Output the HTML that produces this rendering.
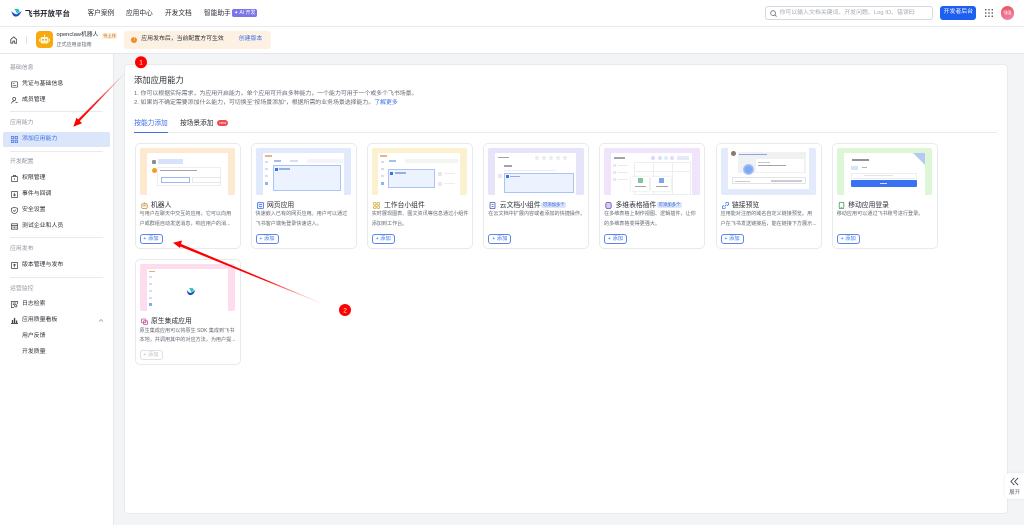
<!DOCTYPE html>
<html lang="zh"><head><meta charset="utf-8"><title>飞书开放平台</title>
<style>
*{box-sizing:border-box;margin:0;padding:0}
html,body{width:1024px;height:525px;overflow:hidden;background:#fff;font-family:"Liberation Sans","Noto Sans CJK SC",sans-serif;color:#1f2329}
#w{position:absolute;left:0;top:0;width:1024px;height:525px;overflow:hidden;background:#fff;filter:blur(.28px)}
.a{position:absolute;white-space:nowrap}
.nav{top:7.5px;font-size:6.7px;line-height:11px;color:#2b2f36}
.sec{left:10px;font-size:5.900px;line-height:9px;color:#8f959e}
.it{left:22px;font-size:5.900px;line-height:9px;color:#2b2f36}
.hr{left:10px;width:93px;height:1px;background:#e8eaed}
.ic{position:absolute;left:10.5px;width:7px;height:7px;fill:none;stroke:#3b4048;stroke-width:.7}
.card{position:absolute;width:106px;height:106px;background:#fff;border:1px solid #e8eaed;border-radius:5px}
.img{position:absolute;left:4px;top:4px;width:95.5px;height:46.5px;overflow:hidden;border-radius:2px}
.in{position:absolute;background:#fff}
.t{position:absolute;left:15.5px;top:55.5px;font-size:6.8px;line-height:11px;color:#2b2f36;white-space:nowrap}
.d{position:absolute;left:4px;top:66.4px;width:98px;font-size:5.100px;line-height:9.300px;color:#646a73;white-space:nowrap}
.b{position:absolute;left:4px;top:90px;width:23px;height:10px;border:.7px solid #5b86f0;border-radius:3px;font-size:5.300px;line-height:8.600px;color:#3c6fe8;text-align:center}
.i{position:absolute;left:5px;top:58px;width:7px;height:7px;fill:none;stroke-width:.8}
.tag{position:absolute;left:57px;top:58px;height:6px;padding:0 1.500px;background:#dbe6fd;border-radius:2px;font-size:4.400px;line-height:6px;color:#2f5fd0;white-space:nowrap}
.bl{position:absolute;background:#d5def0}
</style></head><body>
<div id="w">

<!-- top bar -->
<div class="a" style="left:0;top:0;width:1024px;height:27px;background:#fff;border-bottom:1px solid #e8eaed"></div>
<svg class="a" style="left:11px;top:8px" width="11" height="9.500" viewBox="0 0 14 11"><path d="M.5 3.500C3 6 5 7.500 7 7.500L13.500 3.500C11.500 8 9 10.500 6 10.500C3.500 10.500 1.500 8 .5 3.500Z" fill="#1a4fc4"/><path d="M4 .5H9.500L11 4 7.500 6.500C6.500 4 5.500 2.300 4 .5Z" fill="#26c4b4"/></svg>
<div class="a" style="left:25px;top:7.500px;font-size:7.500px;line-height:11px;font-weight:bold;color:#1f2329">飞书开放平台</div>
<div class="a nav" style="left:87.500px">客户案例</div>
<div class="a nav" style="left:126px">应用中心</div>
<div class="a nav" style="left:165px">开发文档</div>
<div class="a nav" style="left:204px">智能助手</div>
<div class="a" style="left:232.300px;top:9px;width:25px;height:8px;background:#7b74ea;border-radius:2px;color:#fff;font-size:5px;line-height:8px;text-align:center">✦ AI 开发</div>

<div class="a" style="left:764.500px;top:6.300px;width:168.500px;height:13.500px;border:1px solid #d5d8dd;border-radius:3px"></div>
<svg class="a" style="left:769.500px;top:9.500px" width="7" height="7" viewBox="0 0 8 8"><circle cx="3.500" cy="3.500" r="2.700" fill="none" stroke="#646a73" stroke-width=".9"/><path d="M5.500 5.500L7.500 7.500" stroke="#646a73" stroke-width=".9"/></svg>
<div class="a" style="left:779.500px;top:8.500px;font-size:5.900px;line-height:9px;color:#a4a9b1">你可以输入文档关键词、开发问题、Log ID、错误码</div>
<div class="a" style="left:940.300px;top:6.300px;width:36px;height:13.500px;background:#1d5ff0;border-radius:3px;color:#fff;font-size:5.900px;line-height:13.500px;text-align:center">开发者后台</div>
<svg class="a" style="left:984.500px;top:9px" width="8" height="8" viewBox="0 0 8.500 8.500" fill="#555b64"><rect x="0" y="0" width="1.500" height="1.500"/><rect x="3.500" y="0" width="1.500" height="1.500"/><rect x="7" y="0" width="1.500" height="1.500"/><rect x="0" y="3.500" width="1.500" height="1.500"/><rect x="3.500" y="3.500" width="1.500" height="1.500"/><rect x="7" y="3.500" width="1.500" height="1.500"/><rect x="0" y="7" width="1.500" height="1.500"/><rect x="3.500" y="7" width="1.500" height="1.500"/><rect x="7" y="7" width="1.500" height="1.500"/></svg>
<div class="a" style="left:1000.700px;top:6px;width:13.500px;height:13.500px;border-radius:50%;background:linear-gradient(160deg,#e8505a,#f08ab0);color:#fff;font-size:4px;line-height:13.500px;text-align:center">强强</div>

<!-- second bar -->
<div class="a" style="left:0;top:27px;width:1024px;height:27px;background:#fff;border-bottom:1px solid #e6e8eb"></div>
<svg class="a" style="left:9.700px;top:36.200px" width="7.500" height="8" viewBox="0 0 9 10"><path d="M.8 4.300L4.500 1 8.200 4.300V9H5.600V6.300H3.400V9H.8Z" fill="none" stroke="#3b4048" stroke-width="1" stroke-linejoin="round"/></svg>
<div class="a" style="left:26px;top:36px;width:1px;height:8px;background:#e4e6e9"></div>
<div class="a" style="left:36px;top:31px;width:17px;height:17px;border-radius:4px;background:#f7a90f"></div>
<svg class="a" style="left:38px;top:33px" width="13" height="13" viewBox="0 0 13 13"><rect x="2.500" y="4" width="8" height="6.500" rx="1.500" fill="#fff3c8"/><rect x="6" y="1.500" width="1" height="2.500" fill="#fff3c8"/><rect x="1" y="6" width="1" height="2.500" fill="#fff3c8"/><rect x="11" y="6" width="1" height="2.500" fill="#fff3c8"/><circle cx="5" cy="6.800" r=".8" fill="#d18a00"/><circle cx="8" cy="6.800" r=".8" fill="#d18a00"/></svg>
<div class="a" style="left:56.500px;top:31px;font-size:5.800px;line-height:9px;color:#2b2f36">openclaw机器人</div>
<div class="a" style="left:101.700px;top:32.500px;width:15.700px;height:6.500px;background:#fdeedd;border-radius:1.500px;color:#c9761a;font-size:4.200px;line-height:6.500px;text-align:center">待上线</div>
<div class="a" style="left:56.500px;top:40.500px;font-size:5px;line-height:8px;color:#646a73">正式应用@指南</div>
<div class="a" style="left:124.300px;top:30.700px;width:146.400px;height:18.700px;background:#fdf1e3;border-radius:3px"></div>
<div class="a" style="left:131.200px;top:36.500px;width:6.300px;height:6.300px;border-radius:50%;background:#f08a24;color:#fff;font-size:5px;line-height:6.300px;text-align:center">!</div>
<div class="a" style="left:141.300px;top:35.300px;font-size:5.900px;line-height:9px;color:#2b2f36">应用发布后，当前配置方可生效</div>
<div class="a" style="left:238.700px;top:35.300px;font-size:5.900px;line-height:9px;color:#3c6fe8">创建版本</div>

<!-- sidebar -->
<div class="a" style="left:113px;top:54px;width:911px;height:471px;background:#f3f4f6;border-left:1px solid #e6e8eb"></div>
<div class="a sec" style="top:64px">基础信息</div>
<svg class="ic" style="top:80.500px" viewBox="0 0 7 7"><rect x=".4" y=".8" width="6.200" height="5.400" rx=".6"/><path d="M1.700 2.700H3.500M1.700 4.300H5.300"/></svg><div class="a it" style="top:79.500px">凭证与基础信息</div>
<svg class="ic" style="top:96.500px" viewBox="0 0 7 7"><circle cx="3.200" cy="2" r="1.500"/><path d="M.6 6.600C.8 4.800 2 4.200 3.200 4.200M4.500 5.500H6.700"/></svg><div class="a it" style="top:95.500px">成员管理</div>
<div class="a hr" style="top:111px"></div>
<div class="a sec" style="top:119px">应用能力</div>
<div class="a" style="left:3.300px;top:131.700px;width:106.700px;height:15.300px;background:#dbe6fb;border-radius:2px"></div>
<svg class="ic" style="top:135.700px;stroke:#3c6fe8" viewBox="0 0 7 7"><rect x=".4" y=".4" width="2.400" height="2.400"/><rect x="4.200" y=".4" width="2.400" height="2.400"/><rect x=".4" y="4.200" width="2.400" height="2.400"/><rect x="4.200" y="4.200" width="2.400" height="2.400"/></svg>
<div class="a it" style="top:134.800px;color:#3c6fe8">添加应用能力</div>
<div class="a hr" style="top:151.300px"></div>
<div class="a sec" style="top:157.800px">开发配置</div>
<svg class="ic" style="top:174.800px" viewBox="0 0 7 7"><rect x=".5" y="1.500" width="6" height="5.100" rx=".6"/><path d="M2.300 1.500V.5H4.700V1.500M3.500 3.300V4.800"/></svg><div class="a it" style="top:173.800px">权限管理</div>
<svg class="ic" style="top:190.800px" viewBox="0 0 7 7"><rect x=".4" y=".4" width="6.200" height="6.200" rx=".6"/><path d="M3.500 1.800V4.800M2.200 3.600L3.500 4.900 4.800 3.600"/></svg><div class="a it" style="top:189.800px">事件与回调</div>
<svg class="ic" style="top:206.800px" viewBox="0 0 7 7"><path d="M3.500.4L6.500 1.300V3.500C6.500 5.200 5 6.200 3.500 6.700 2 6.200.5 5.200.5 3.500V1.300Z"/><path d="M2.200 3.400L3.200 4.400 4.900 2.600"/></svg><div class="a it" style="top:205.800px">安全设置</div>
<svg class="ic" style="top:222.800px" viewBox="0 0 7 7"><rect x=".4" y=".8" width="6.200" height="5.400"/><path d="M.4 2.500H6.600M2 3.500V5.200M3.500 3.500V5.200M5 3.500V5.200"/></svg><div class="a it" style="top:221.800px">测试企业和人员</div>
<div class="a hr" style="top:237.300px"></div>
<div class="a sec" style="top:245px">应用发布</div>
<svg class="ic" style="top:262px" viewBox="0 0 7 7"><rect x=".4" y=".4" width="6.200" height="6.200" rx=".6"/><path d="M3.500 5.200V2.200M2.200 3.400L3.500 2.100 4.800 3.400"/></svg><div class="a it" style="top:261px">版本管理与发布</div>
<div class="a hr" style="top:277.300px"></div>
<div class="a sec" style="top:284.500px">运营监控</div>
<svg class="ic" style="top:301.200px" viewBox="0 0 7 7"><path d="M3 6.600H.5V.4H6.500V3"/><path d="M1.800 2H5.200M1.800 3.500H3.500"/><circle cx="4.800" cy="4.800" r="1.200"/></svg><div class="a it" style="top:300.200px">日志检索</div>
<svg class="a" style="left:10.500px;top:317px" width="7" height="7" viewBox="0 0 8 8" fill="#3b4048"><rect x="0" y="7" width="8" height="1"/><rect x="1" y="3.500" width="1.500" height="3.500"/><rect x="3.300" y="1" width="1.500" height="6"/><rect x="5.600" y="4" width="1.500" height="3"/></svg>
<div class="a it" style="top:316.200px">应用质量看板</div>
<svg class="a" style="left:97.500px;top:318px" width="6" height="5" viewBox="0 0 6 5"><path d="M1 3.500L3 1.500 5 3.500" fill="none" stroke="#8f959e" stroke-width=".7"/></svg>
<div class="a it" style="top:332.200px">用户反馈</div>
<div class="a it" style="top:348.200px">开发质量</div>

<!-- main panel -->
<div class="a" style="left:124px;top:63.500px;width:883.500px;height:450.700px;background:#fff;border:1px solid #e8eaed;border-radius:4px"></div>
<div class="a" style="left:134px;top:73.500px;font-size:8.300px;line-height:13px;color:#2b2f36">添加应用能力</div>
<div class="a" style="left:134px;top:89.500px;font-size:5.900px;line-height:9px;color:#646a73">1. 你可以根据实际需求，为应用开启能力。单个应用可开启多种能力，一个能力可用于一个或多个飞书场景。</div>
<div class="a" style="left:134px;top:98.500px;font-size:5.900px;line-height:9px;color:#646a73">2. 如果尚不确定需要添加什么能力，可切换至“按场景添加”，根据所需的业务场景选择能力。<span style="color:#3c6fe8">了解更多</span></div>
<div class="a" style="left:134.300px;top:118px;font-size:6.700px;line-height:11px;color:#3c6fe8">按能力添加</div>
<div class="a" style="left:180px;top:118px;font-size:6.700px;line-height:11px;color:#2b2f36">按场景添加</div>
<div class="a" style="left:217.300px;top:120px;width:11px;height:6px;border-radius:3px;background:#ef4a50;color:#fff;font-size:3.800px;line-height:6px;text-align:center">new</div>
<div class="a" style="left:134px;top:132.200px;width:863px;height:1px;background:#e8eaed"></div>
<div class="a" style="left:134.300px;top:131.500px;width:33.700px;height:1.200px;background:#3c6fe8"></div>

<!-- cards -->
<div class="card" style="left:134.500px;top:143px">
 <div class="img" style="background:#fde8d0"><div class="in" style="left:7px;top:5px;width:81px;height:42px"></div>
  <div class="bl" style="left:12.500px;top:11.500px;width:4px;height:4px;background:#8a8d92;border-radius:1px"></div><div class="bl" style="left:18.500px;top:11px;width:25px;height:5px;background:#d6e4fb"></div>
  <div class="bl" style="left:12px;top:19.500px;width:5px;height:5px;border-radius:50%;background:#f39a2c"></div>
  <div class="bl" style="left:20.500px;top:22px;width:37px;height:1.300px;background:#a0a3a8"></div>
  <div class="in" style="left:17.500px;top:19px;width:64px;height:19px;border:.5px solid #eceef1"></div>
  <div class="bl" style="left:20.500px;top:22px;width:37px;height:1.300px;background:#a0a3a8"></div>
  <div class="in" style="left:21px;top:29px;width:29px;height:5.700px;border:.7px solid #9db8f0"></div>
  <div class="in" style="left:52px;top:29px;width:29px;height:5.700px;border:.5px solid #e6e8ec"></div>
 </div>
 <svg class="i" viewBox="0 0 7 7" stroke="#c98a2e"><rect x=".8" y="1.800" width="5.400" height="4.600" rx="1"/><path d="M3.500.4V1.800M2 3.800H5"/></svg><div class="t">机器人</div>
 <div class="d">与用户在聊天中交互的应用。它可以向用<br>户或群组自动发送消息，响应用户的消...</div>
 <div class="b">+ 添加</div>
</div>

<div class="card" style="left:250.500px;top:143px">
 <div class="img" style="background:#e1e9fc"><div class="in" style="left:7px;top:5px;width:81px;height:42px"></div>
  <div class="bl" style="left:9px;top:7px;width:7px;height:1.500px;background:#e9b48a"></div>
  <div class="bl" style="left:9px;top:13px;width:3px;height:2px"></div><div class="bl" style="left:9px;top:20px;width:3px;height:2px"></div><div class="bl" style="left:9px;top:27px;width:3px;height:2px"></div><div class="bl" style="left:9px;top:34px;width:3px;height:3px;background:#8db4f5"></div>
  <div class="bl" style="left:18px;top:12px;width:7px;height:1.500px;background:#a8bde8"></div><div class="bl" style="left:34px;top:12px;width:8px;height:1.500px"></div><div class="bl" style="left:51px;top:11px;width:36px;height:4px;background:#f3f5f8"></div>
  <div class="bl" style="left:17.300px;top:17px;width:68.700px;height:25.700px;background:#edf3fe;border:.8px solid #a9c4f5"></div>
  <div class="bl" style="left:19px;top:19.500px;width:3px;height:3px;background:#3c6fe8"></div><div class="bl" style="left:23px;top:20.300px;width:11px;height:1.300px;background:#96aee0"></div>
 </div>
 <svg class="i" viewBox="0 0 7 7" stroke="#3c6fe8"><rect x=".5" y=".5" width="6" height="6" rx=".8" fill="#e3ecfd"/><path d="M2 2.500H5M2 4.500H5"/></svg><div class="t">网页应用</div>
 <div class="d">快速嵌入已有的网页应用。用户可以通过<br>飞书客户端免登录快速进入。</div>
 <div class="b">+ 添加</div>
</div>

<div class="card" style="left:366.700px;top:143px">
 <div class="img" style="background:#fbf1cf"><div class="in" style="left:6.300px;top:5px;width:81.700px;height:42px"></div>
  <div class="bl" style="left:8px;top:7px;width:7px;height:1.500px;background:#e9b48a"></div>
  <div class="bl" style="left:9px;top:13px;width:3px;height:2px"></div><div class="bl" style="left:9px;top:20px;width:3px;height:2px"></div><div class="bl" style="left:9px;top:27px;width:3px;height:2px"></div><div class="bl" style="left:9px;top:34px;width:3px;height:3px;background:#8db4f5"></div>
  <div class="bl" style="left:17px;top:12px;width:7px;height:1.500px;background:#a8bde8"></div><div class="bl" style="left:33px;top:11px;width:53px;height:4px;background:#f3f5f0"></div>
  <div class="bl" style="left:16.300px;top:21px;width:46.700px;height:18.700px;background:#edf3fe;border:.8px solid #a9c4f5"></div>
  <div class="bl" style="left:18.500px;top:23.500px;width:3px;height:3px;background:#3c6fe8"></div><div class="bl" style="left:23px;top:24.300px;width:11px;height:1.300px;background:#96aee0"></div>
  <div class="bl" style="left:66px;top:23.700px;width:4px;height:4px;background:#e6e8ec"></div><div class="bl" style="left:72px;top:25px;width:11px;height:1px;background:#eceef0"></div>
  <div class="bl" style="left:66px;top:33.700px;width:4px;height:4px;background:#e6e8ec"></div><div class="bl" style="left:72px;top:35px;width:11px;height:1px;background:#eceef0"></div>
 </div>
 <svg class="i" viewBox="0 0 7 7" stroke="#d8aa3a"><rect x=".5" y=".5" width="2.500" height="2.500" rx=".8"/><rect x="4" y=".5" width="2.500" height="2.500" rx=".8"/><rect x=".5" y="4" width="2.500" height="2.500" rx=".8"/><rect x="4" y="4" width="2.500" height="2.500" rx=".8"/></svg><div class="t" style="left:16.300px">工作台小组件</div>
 <div class="d">实时展现图表、图文资讯等信息通过小组件<br>添加到工作台。</div>
 <div class="b">+ 添加</div>
</div>

<div class="card" style="left:483.300px;top:143px">
 <div class="img" style="background:#e5e4f9"><div class="in" style="left:7px;top:5px;width:81px;height:42px"></div>
  <div class="bl" style="left:10px;top:8.500px;width:11px;height:1.500px;background:#a0a3a8"></div>
  <div class="bl" style="left:47px;top:8px;width:4px;height:4px;border-radius:50%;background:#ebedf0"></div><div class="bl" style="left:54px;top:8px;width:4px;height:4px;border-radius:50%;background:#ebedf0"></div><div class="bl" style="left:61px;top:8px;width:4px;height:4px;border-radius:50%;background:#ebedf0"></div><div class="bl" style="left:68px;top:8px;width:4px;height:4px;border-radius:50%;background:#ebedf0"></div><div class="bl" style="left:75px;top:8px;width:4px;height:4px;border-radius:50%;background:#ebedf0"></div>
  <div class="bl" style="left:16px;top:17px;width:8px;height:1.500px;background:#a0a3a8"></div>
  <div class="bl" style="left:16px;top:21.500px;width:52px;height:1.500px;background:#eceef1"></div>
  <div class="bl" style="left:10px;top:26px;width:4px;height:4px;background:#e6e8ec"></div>
  <div class="bl" style="left:15.300px;top:24.700px;width:70px;height:20px;background:#edf3fe;border:.8px solid #a9c4f5"></div>
  <div class="bl" style="left:18px;top:27px;width:3px;height:3px;background:#3c6fe8"></div><div class="bl" style="left:22px;top:27.800px;width:10px;height:1.300px;background:#96aee0"></div>
 </div>
 <svg class="i" viewBox="0 0 7 7" stroke="#4a55a8"><rect x="1" y=".4" width="5" height="6.200" rx="1"/><path d="M2.500 2.500H4.500M2.500 4.500H4.500"/></svg><div class="t">云文档小组件</div><div class="tag">可添加多个</div>
 <div class="d">在云文档中扩展内容或者添加的快捷操作。</div>
 <div class="b">+ 添加</div>
</div>

<div class="card" style="left:599px;top:143px">
 <div class="img" style="background:#efe4fa"><div class="in" style="left:7px;top:5px;width:81px;height:42px"></div>
  <div class="bl" style="left:10px;top:9px;width:11px;height:1.500px;background:#a0a3a8"></div>
  <div class="bl" style="left:47px;top:8px;width:4px;height:4px;border-radius:50%;background:#dcd8f6"></div><div class="bl" style="left:54px;top:8px;width:4px;height:4px;border-radius:50%;background:#d6e2fa"></div><div class="bl" style="left:60px;top:8px;width:4px;height:4px;border-radius:50%;background:#d6f0f5"></div><div class="bl" style="left:66px;top:8px;width:4px;height:4px;border-radius:50%;background:#e9d9f8"></div><div class="bl" style="left:73px;top:8px;width:12px;height:4px;background:#e4eafa"></div>
  <div class="bl" style="left:9px;top:16px;width:3px;height:3px;background:#e8eaee"></div><div class="bl" style="left:9px;top:23px;width:3px;height:3px;background:#e8eaee"></div><div class="bl" style="left:9px;top:30px;width:3px;height:3px;background:#e8eaee"></div><div class="bl" style="left:14px;top:17px;width:10px;height:1px;background:#e8eaee"></div><div class="bl" style="left:14px;top:24px;width:10px;height:1px;background:#e8eaee"></div><div class="bl" style="left:14px;top:31px;width:10px;height:1px;background:#e8eaee"></div>
  <div class="in" style="left:30px;top:14px;width:57px;height:33px;border:.5px solid #eceef1"></div>
  <div class="bl" style="left:30px;top:23px;width:57px;height:.5px;background:#eceef1"></div><div class="bl" style="left:49px;top:14px;width:.5px;height:33px;background:#eceef1"></div><div class="bl" style="left:68px;top:14px;width:.5px;height:33px;background:#eceef1"></div>
  <div class="in" style="left:27.400px;top:28.700px;width:18px;height:14px;box-shadow:0 0 2px #d5d5d5"></div><div class="bl" style="left:34px;top:30px;width:5px;height:5px;background:#7cc89a"></div><div class="bl" style="left:31px;top:38px;width:11px;height:1.300px;background:#a0a3a8"></div>
  <div class="in" style="left:47.400px;top:28.700px;width:20px;height:14px;box-shadow:0 0 2px #d5d5d5"></div><div class="bl" style="left:55px;top:30px;width:5px;height:5px;background:#7ea4f0"></div><div class="bl" style="left:51.500px;top:38px;width:12px;height:1.300px;background:#a0a3a8"></div>
 </div>
 <svg class="i" viewBox="0 0 7 7" stroke="#6b4ab8"><rect x=".8" y=".4" width="5.400" height="6.200" rx="1.800" fill="#d9c8f2"/></svg><div class="t">多维表格插件</div><div class="tag">可添加多个</div>
 <div class="d">在多维表格上制作视图、逻辑插件，让你<br>的多维表格变得更强大。</div>
 <div class="b">+ 添加</div>
</div>

<div class="card" style="left:715.500px;top:143px">
 <div class="img" style="background:#e3eafc"><div class="in" style="left:7px;top:0;width:81px;height:41px"></div>
  <div class="bl" style="left:10px;top:3px;width:5px;height:5px;border-radius:50%;background:#8a7a6a"></div><div class="bl" style="left:18px;top:4.500px;width:28px;height:1.300px;background:#8da6e2"></div>
  <div class="bl" style="left:17.400px;top:4.300px;width:68px;height:21px;background:#f0f1f3"></div>
  <div class="bl" style="left:18px;top:5.500px;width:28px;height:1.300px;background:#8da6e2"></div>
  <div class="in" style="left:35px;top:11px;width:48px;height:13px"></div>
  <div class="bl" style="left:37px;top:17px;width:28px;height:1.200px;background:#a0a3a8"></div>
  <div class="bl" style="left:37px;top:14px;width:12px;height:1px;background:#c4c7cc"></div>
  <div class="bl" style="left:22px;top:16px;width:11px;height:11px;border-radius:50%;background:radial-gradient(circle,#7fa8f6 40%,rgba(200,220,255,.2) 100%)"></div>
  <div class="in" style="left:11px;top:29.300px;width:74px;height:7px;border:.7px solid #e2e4e8"></div>
  <div class="bl" style="left:14px;top:32.500px;width:15px;height:1px;background:#ccc"></div><div class="bl" style="left:50px;top:32px;width:31px;height:2px;background:#c9cdd2"></div>
 </div>
 <svg class="i" viewBox="0 0 7 7" stroke="#3c6fe8"><path d="M3.200 1.500L4.300.6C5 0 6 .2 6.400.8 6.900 1.500 6.800 2.300 6.200 2.800L5 3.800M3.800 5.500L2.700 6.400C2 7 1 6.800.6 6.200.1 5.500.2 4.700.8 4.200L2 3.200M2.600 4.500L4.500 2.600"/></svg><div class="t">链接预览</div>
 <div class="d">应用能对注册的域名自定义链接预览。用<br>户在飞书发送链接后，能在链接下方展示...</div>
 <div class="b">+ 添加</div>
</div>

<div class="card" style="left:831.700px;top:143px">
 <div class="img" style="background:#dcf6d6"><div class="in" style="left:7px;top:5px;width:81px;height:42px"></div>
  <div style="position:absolute;left:76px;top:5px;width:0;height:0;border-top:12px solid #b4caf4;border-left:12px solid transparent"></div>
  <div class="bl" style="left:15px;top:11px;width:17px;height:1.500px;background:#909398"></div>
  <div class="bl" style="left:14.400px;top:17.500px;width:7px;height:4px;background:#d6e4fb"></div><div class="bl" style="left:25px;top:19px;width:5px;height:1.300px;background:#b0b3b8"></div>
  <div class="in" style="left:14.400px;top:24.500px;width:66px;height:6px;border:.5px solid #eceef1"></div><div class="bl" style="left:27px;top:27px;width:29px;height:1px;background:#e2e4e8"></div>
  <div class="bl" style="left:14.400px;top:32px;width:66px;height:6.700px;background:#3a72f6;border-radius:1px"></div>
  <div class="bl" style="left:43px;top:35px;width:7px;height:1px;background:#cfe0ff"></div>
 </div>
 <svg class="i" viewBox="0 0 7 7" stroke="#3f9a5a"><rect x="1.200" y=".4" width="4.600" height="6.200" rx=".8"/><path d="M2.800 5.400H4.200"/></svg><div class="t">移动应用登录</div>
 <div class="d">移动应用可以通过飞书账号进行登录。</div>
 <div class="b">+ 添加</div>
</div>

<div class="card" style="left:134.500px;top:259.300px">
 <div class="img" style="background:#fddcee"><div class="in" style="left:7px;top:5px;width:81px;height:42px"></div>
  <div class="bl" style="left:9px;top:6.500px;width:6px;height:1.300px;background:#e3ad80"></div>
  <div class="bl" style="left:9px;top:12px;width:3px;height:2px"></div><div class="bl" style="left:9px;top:19px;width:3px;height:2px"></div><div class="bl" style="left:9px;top:26px;width:3px;height:2px"></div><div class="bl" style="left:9px;top:33px;width:3px;height:2px"></div><div class="bl" style="left:9px;top:39px;width:3px;height:3px;background:#78b0f5"></div>
  <svg style="position:absolute;left:46px;top:22.700px" width="10" height="9" viewBox="0 0 14 11"><path d="M1 3.500C3 6 5 7.500 7 7.500L13 3.500C11.500 8 9 10.500 6 10.500C3.500 10.500 1.500 8 1 3.500Z" fill="#1a4fc4"/><path d="M4 .8H9.500L11 4 7.500 6.500C6.500 4 5.500 2.300 4 .8Z" fill="#26c4b4"/></svg>
 </div>
 <svg class="i" viewBox="0 0 7 7" stroke="#c0569a"><rect x=".4" y="1" width="4.400" height="3.800" rx=".8"/><rect x="2.400" y="2.800" width="4.200" height="3.600" rx=".8"/></svg><div class="t">原生集成应用</div>
 <div class="d">原生集成应用可以将原生 SDK 集成到飞书<br>本地，并调用其中的对应方法，为用户提...</div>
 <div class="b" style="border-color:#dee0e3;color:#bbbfc4">+ 添加</div>
</div>

<!-- expand -->
<div class="a" style="left:1005px;top:473.300px;width:19px;height:26px;background:#fff;border-radius:4px 0 0 4px;box-shadow:0 0 3px rgba(0,0,0,.08)"></div>
<svg class="a" style="left:1009.500px;top:477px" width="9" height="9" viewBox="0 0 10 9"><path d="M4.800 .5L1 4.500 4.800 8.500M9 .5L5.200 4.500 9 8.500" fill="none" stroke="#3b4048" stroke-width="1"/></svg>
<div class="a" style="left:1009.300px;top:488.500px;font-size:5.400px;line-height:8px;color:#646a73">展开</div>

<!-- annotations -->
<svg class="a" style="left:0;top:0" width="1024" height="525" viewBox="0 0 1024 525">
<defs>
<linearGradient id="g1" gradientUnits="userSpaceOnUse" x1="126" y1="72" x2="74" y2="126"><stop offset="0" stop-color="#ff2020" stop-opacity="0"/><stop offset=".55" stop-color="#f52020"/><stop offset="1" stop-color="#f00"/></linearGradient>
<linearGradient id="g2" gradientUnits="userSpaceOnUse" x1="325" y1="305" x2="175" y2="243"><stop offset="0" stop-color="#ff2020" stop-opacity="0"/><stop offset=".4" stop-color="#f00"/><stop offset="1" stop-color="#f00"/></linearGradient>
</defs>
<path d="M126 71.800L126.200 72.100 77.500 123.500 75.800 121.800Z" fill="url(#g1)"/>
<path d="M73.300 126.700L76.500 117.800 82 123.200Z" fill="#f00"/>
<path d="M326 305L325.800 305.300 179 246 180 243.500Z" fill="url(#g2)"/>
<path d="M173 242.700L182 240.500 180 248Z" fill="#f00"/>
<circle cx="141" cy="62.300" r="6" fill="#f00"/>
<circle cx="345" cy="310" r="6" fill="#f00"/>
<text x="141" y="64.600" font-size="6.500" fill="#fff" text-anchor="middle" font-family="Liberation Sans">1</text>
<text x="345" y="312.300" font-size="6.500" fill="#fff" text-anchor="middle" font-family="Liberation Sans">2</text>
</svg>
</div>
</body></html>
